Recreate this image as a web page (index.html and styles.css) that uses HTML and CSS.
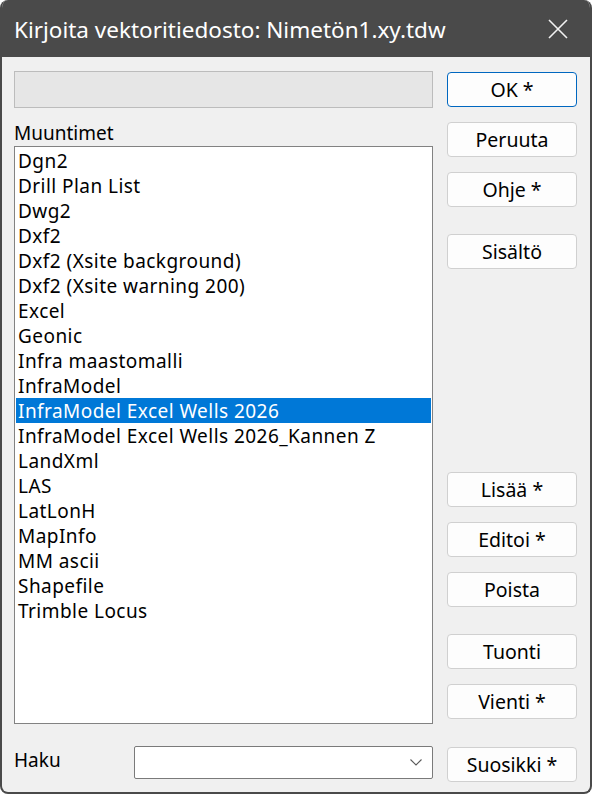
FILE: index.html
```html
<!DOCTYPE html>
<html lang="fi">
<head>
<meta charset="utf-8">
<title>Kirjoita vektoritiedosto</title>
<link rel="stylesheet" href="styles.css">
</head>
<body>
<div class="window">
  <div class="titlebar">
    <span class="title">Kirjoita vektoritiedosto: Nimetön1.xy.tdw</span>
    <svg class="close" width="20" height="20" viewBox="0 0 20 20">
      <path d="M1 1 L19 19 M19 1 L1 19" stroke="#f2f2f2" stroke-width="1.6" fill="none"/>
    </svg>
  </div>
  <div class="content">
    <div class="left">
      <div class="progress"></div>
      <div class="label">Muuntimet</div>
      <ul class="list">
        <li>Dgn2</li>
        <li>Drill Plan List</li>
        <li>Dwg2</li>
        <li>Dxf2</li>
        <li>Dxf2 (Xsite background)</li>
        <li>Dxf2 (Xsite warning 200)</li>
        <li>Excel</li>
        <li>Geonic</li>
        <li>Infra maastomalli</li>
        <li>InfraModel</li>
        <li class="selected">InfraModel Excel Wells 2026</li>
        <li>InfraModel Excel Wells 2026_Kannen Z</li>
        <li>LandXml</li>
        <li>LAS</li>
        <li>LatLonH</li>
        <li>MapInfo</li>
        <li>MM ascii</li>
        <li>Shapefile</li>
        <li>Trimble Locus</li>
      </ul>
      <div class="search">
        <span class="search-label">Haku</span>
        <div class="combo">
          <svg class="chevron" width="12" height="7" viewBox="0 0 12 7">
            <path d="M0.5 0.5 L6 6 L11.5 0.5" stroke="#5a5a5a" stroke-width="1.1" fill="none"/>
          </svg>
        </div>
      </div>
    </div>
    <div class="right">
      <button class="btn default">OK *</button>
      <button class="btn gap15">Peruuta</button>
      <button class="btn gap15">Ohje *</button>
      <button class="btn gap27">Sisältö</button>
      <div class="spacer"></div>
      <button class="btn">Lisää *</button>
      <button class="btn gap15">Editoi *</button>
      <button class="btn gap15">Poista</button>
      <button class="btn gap27">Tuonti</button>
      <button class="btn gap15">Vienti *</button>
      <button class="btn gap28">Suosikki *</button>
    </div>
  </div>
</div>
</body>
</html>
```

FILE: styles.css
```css
html, body {
  margin: 0;
  padding: 0;
  background: #ffffff;
}

.window {
  box-sizing: border-box;
  width: 592px;
  height: 794px;
  border: 2px solid #4a4a4a;
  border-top: none;
  border-radius: 8px;
  background: #f0f0f0;
  overflow: hidden;
  display: flex;
  flex-direction: column;
  font-family: "Noto Sans", "Open Sans", sans-serif;
  color: #000;
}

.titlebar {
  height: 57px;
  margin: 0 -2px;
  background: #4a4a4a;
  display: flex;
  align-items: center;
  justify-content: space-between;
  padding: 0 24px 0 14px;
  flex-shrink: 0;
}

.title {
  color: #ffffff;
  font-size: 22.5px;
  margin-top: 2px;
}

.close {
  display: block;
}

.content {
  flex: 1;
  display: flex;
  gap: 14px;
  padding: 14px 13px 12px 12px;
}

.left {
  width: 419px;
  display: flex;
  flex-direction: column;
}

.progress {
  height: 37px;
  box-sizing: border-box;
  background: #e6e6e6;
  border: 1px solid #bcbcbc;
}

.label {
  margin-top: 13px;
  height: 25px;
  font-size: 19px;
  line-height: 25px;
}

.list {
  list-style: none;
  margin: 0;
  padding: 1px 1px;
  height: 578px;
  box-sizing: border-box;
  background: #ffffff;
  border: 1px solid #828282;
  font-size: 19px;
  letter-spacing: 0.45px;
}

.list li {
  height: 25px;
  line-height: 26px;
  padding-left: 2px;
  white-space: nowrap;
}

.list li.selected {
  background: #0078d7;
  color: #ffffff;
}

.search {
  margin-top: 22px;
  display: flex;
  align-items: center;
}

.search-label {
  width: 120px;
  font-size: 19px;
  margin-top: -6px;
}

.combo {
  flex: 1;
  height: 33px;
  box-sizing: border-box;
  background: #ffffff;
  border: 1px solid #7a7a7a;
  border-radius: 2px;
  display: flex;
  align-items: center;
  justify-content: flex-end;
  padding-right: 10px;
}

.chevron {
  display: block;
}

.right {
  width: 130px;
  display: flex;
  flex-direction: column;
  padding-top: 1px;
}

.btn {
  height: 35px;
  box-sizing: border-box;
  background: #fdfdfd;
  border: 1px solid #d0d0d0;
  border-radius: 4px;
  font-family: "Noto Sans", "Open Sans", sans-serif;
  font-size: 19.5px;
  color: #000;
  padding: 0;
  flex-shrink: 0;
}

.btn.default {
  border-color: #0067c0;
}

.gap15 { margin-top: 15px; }
.gap27 { margin-top: 27px; }
.gap28 { margin-top: 28px; }

.spacer {
  height: 203px;
  flex-shrink: 0;
}
```
